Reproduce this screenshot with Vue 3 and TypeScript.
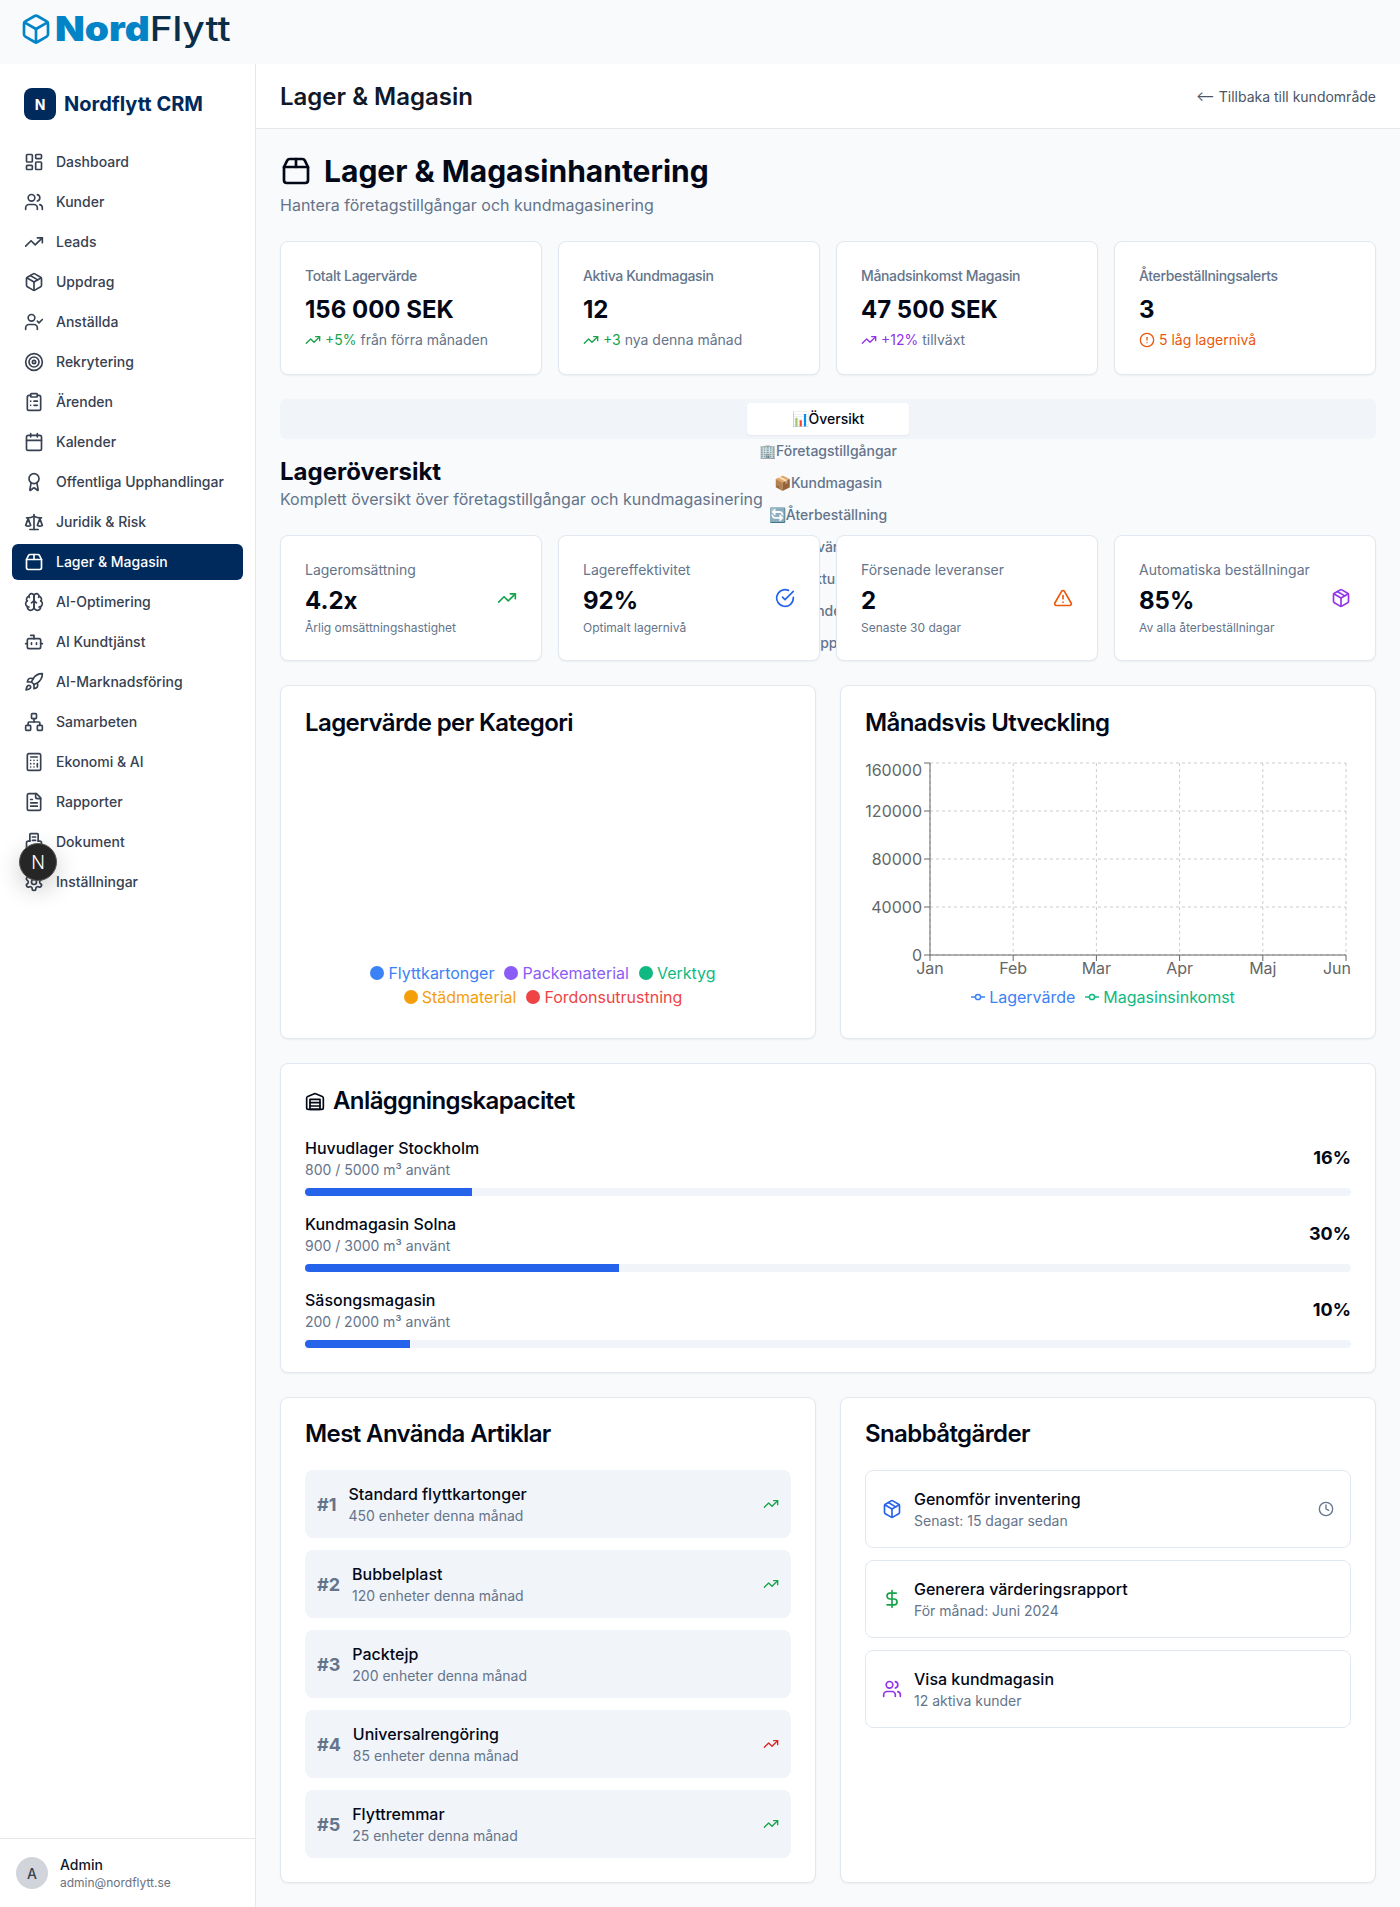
<template>
  <div class="page">
    <header class="logo-bar">
      <Icon name="box" :size="32" class="logo-icon" />
      <span class="logo-text"><b>Nord</b><span>Flytt</span></span>
    </header>

    <div class="layout">
      <aside class="sidebar">
        <div class="brand">
          <span class="brand-mark">N</span>
          <span class="brand-name">Nordflytt CRM</span>
        </div>
        <nav class="nav">
          <a v-for="item in navItems" :key="item.label" class="nav-item" :class="{ active: item.active }">
            <Icon :name="item.icon" />
            <span>{{ item.label }}</span>
          </a>
        </nav>
        <div class="user">
          <span class="avatar">A</span>
          <div>
            <div class="user-name">Admin</div>
            <div class="user-mail">admin@nordflytt.se</div>
          </div>
        </div>
      </aside>

      <main class="main">
        <div class="topbar">
          <h1>Lager &amp; Magasin</h1>
          <a class="back">⟵ Tillbaka till kundområde</a>
        </div>

        <div class="content">
          <div class="page-title">
            <Icon name="package2" :size="32" />
            <h2>Lager &amp; Magasinhantering</h2>
          </div>
          <p class="page-sub">Hantera företagstillgångar och kundmagasinering</p>

          <section class="grid-4">
            <div v-for="stat in stats" :key="stat.label" class="card stat">
              <div class="stat-label">{{ stat.label }}</div>
              <div class="stat-value">{{ stat.value }}</div>
              <div class="stat-note">
                <Icon :name="stat.icon" :size="16" :class="stat.tone" />
                <span :class="stat.tone">{{ stat.change }}</span>
                <span v-if="stat.rest">&nbsp;{{ stat.rest }}</span>
              </div>
            </div>
          </section>

          <div class="tabs">
            <div class="tab-list">
              <div v-for="(tab, i) in tabs" :key="tab" class="tab" :class="{ selected: i === 0 }">{{ tab }}</div>
            </div>
          </div>

          <h3 class="section-title">Lageröversikt</h3>
          <p class="section-sub">Komplett översikt över företagstillgångar och kundmagasinering</p>

          <section class="grid-4">
            <div v-for="kpi in kpis" :key="kpi.label" class="card kpi">
              <div>
                <div class="kpi-label">{{ kpi.label }}</div>
                <div class="kpi-value">{{ kpi.value }}</div>
                <div class="kpi-note">{{ kpi.note }}</div>
              </div>
              <Icon :name="kpi.icon" :class="kpi.tone" />
            </div>
          </section>

          <section class="grid-2">
            <div class="card panel">
              <h3 class="card-title low">Lagervärde per Kategori</h3>
              <div class="chart chart-pie">
                <div class="pie-legend">
                  <span v-for="c in categories" :key="c.name" class="legend-item" :style="{ color: c.color }">
                    <i class="legend-dot" :style="{ background: c.color }"></i>{{ c.name }}
                  </span>
                </div>
              </div>
            </div>

            <div class="card panel">
              <h3 class="card-title low">Månadsvis Utveckling</h3>
              <div class="chart">
                <svg class="line-chart" width="486" height="227" viewBox="0 0 486 227">
                  <g stroke="#ccc" stroke-dasharray="3 3" fill="none">
                    <line v-for="y in yTicks" :key="y.label" x1="65" x2="481" :y1="y.y" :y2="y.y" />
                    <line v-for="x in xTicks" :key="x.label" :x1="x.x" :x2="x.x" y1="5" y2="197" />
                  </g>
                  <g stroke="#666" fill="none">
                    <line x1="65" x2="65" y1="5" y2="197" />
                    <line x1="65" x2="481" y1="197" y2="197" />
                    <line v-for="y in yTicks" :key="y.label" x1="59" x2="65" :y1="y.y" :y2="y.y" />
                    <line v-for="x in xTicks" :key="x.label" :x1="x.x" :x2="x.x" y1="197" y2="203" />
                  </g>
                  <g class="tick">
                    <text v-for="y in yTicks" :key="y.label" x="57" :y="y.textY" text-anchor="end">{{ y.label }}</text>
                    <text v-for="x in xTicks" :key="x.label" :x="x.textX" y="216" :text-anchor="x.anchor">{{ x.label }}</text>
                  </g>
                </svg>
                <div class="line-legend">
                  <span v-for="s in series" :key="s.name" class="legend-item" :style="{ color: s.color }">
                    <svg width="14" height="14" viewBox="0 0 14 14" fill="none" :stroke="s.color" stroke-width="1.5">
                      <line x1="0" x2="14" y1="7" y2="7" />
                      <circle cx="7" cy="7" r="2.6" fill="#fff" />
                    </svg>{{ s.name }}
                  </span>
                </div>
              </div>
            </div>
          </section>

          <section class="card capacity">
            <h3 class="card-title low with-icon">
              <Icon name="warehouse" />
              Anläggningskapacitet
            </h3>
            <div v-for="site in sites" :key="site.name" class="site">
              <div class="site-head">
                <div>
                  <div class="row-name">{{ site.name }}</div>
                  <div class="row-sub">{{ site.used }} / {{ site.total }} m³ använt</div>
                </div>
                <div class="site-pct">{{ pct(site) }}%</div>
              </div>
              <div class="bar"><div class="bar-fill" :style="{ width: pct(site) + '%' }"></div></div>
            </div>
          </section>

          <section class="grid-2 bottom">
            <div class="card panel">
              <h3 class="card-title">Mest Använda Artiklar</h3>
              <div class="list">
                <div v-for="(art, i) in articles" :key="art.name" class="article">
                  <span class="rank">#{{ i + 1 }}</span>
                  <div class="grow">
                    <div class="row-name">{{ art.name }}</div>
                    <div class="row-sub">{{ art.count }} enheter denna månad</div>
                  </div>
                  <Icon v-if="art.tone" name="trending" :size="16" :class="art.tone" />
                </div>
              </div>
            </div>

            <div class="card panel">
              <h3 class="card-title">Snabbåtgärder</h3>
              <div class="list">
                <div v-for="act in actions" :key="act.name" class="action">
                  <Icon :name="act.icon" :class="act.tone" />
                  <div class="grow">
                    <div class="row-name">{{ act.name }}</div>
                    <div class="row-sub">{{ act.sub }}</div>
                  </div>
                  <Icon v-if="act.clock" name="clock" :size="16" class="muted" />
                </div>
              </div>
            </div>
          </section>
        </div>
      </main>
    </div>

    <div class="dev-badge">N</div>
  </div>
</template>

<script setup lang="ts">
import { h } from 'vue'

const icons: Record<string, string> = {
  box: '<path d="M21 8a2 2 0 0 0-1-1.73l-7-4a2 2 0 0 0-2 0l-7 4A2 2 0 0 0 3 8v8a2 2 0 0 0 1 1.73l7 4a2 2 0 0 0 2 0l7-4A2 2 0 0 0 21 16Z"/><path d="m3.3 7 8.7 5 8.7-5"/><path d="M12 22V12"/>',
  dashboard: '<rect width="7" height="9" x="3" y="3" rx="1"/><rect width="7" height="5" x="14" y="3" rx="1"/><rect width="7" height="9" x="14" y="12" rx="1"/><rect width="7" height="5" x="3" y="16" rx="1"/>',
  users: '<path d="M16 21v-2a4 4 0 0 0-4-4H6a4 4 0 0 0-4 4v2"/><circle cx="9" cy="7" r="4"/><path d="M22 21v-2a4 4 0 0 0-3-3.87"/><path d="M16 3.13a4 4 0 0 1 0 7.75"/>',
  trending: '<polyline points="22 7 13.5 15.5 8.5 10.5 2 17"/><polyline points="16 7 22 7 22 13"/>',
  package: '<path d="m7.5 4.27 9 5.15"/><path d="M21 8a2 2 0 0 0-1-1.73l-7-4a2 2 0 0 0-2 0l-7 4A2 2 0 0 0 3 8v8a2 2 0 0 0 1 1.73l7 4a2 2 0 0 0 2 0l7-4A2 2 0 0 0 21 16Z"/><path d="m3.3 7 8.7 5 8.7-5"/><path d="M12 22V12"/>',
  userCheck: '<path d="M16 21v-2a4 4 0 0 0-4-4H6a4 4 0 0 0-4 4v2"/><circle cx="9" cy="7" r="4"/><polyline points="16 11 18 13 22 9"/>',
  target: '<circle cx="12" cy="12" r="10"/><circle cx="12" cy="12" r="6"/><circle cx="12" cy="12" r="2"/>',
  clipboard: '<rect width="8" height="4" x="8" y="2" rx="1" ry="1"/><path d="M16 4h2a2 2 0 0 1 2 2v14a2 2 0 0 1-2 2H6a2 2 0 0 1-2-2V6a2 2 0 0 1 2-2h2"/><path d="M12 11h4"/><path d="M12 16h4"/><path d="M8 11h.01"/><path d="M8 16h.01"/>',
  calendar: '<path d="M8 2v4"/><path d="M16 2v4"/><rect width="18" height="18" x="3" y="4" rx="2"/><path d="M3 10h18"/>',
  award: '<path d="m15.477 12.89 1.515 8.526a.5.5 0 0 1-.81.47l-3.58-2.687a1 1 0 0 0-1.197 0l-3.586 2.686a.5.5 0 0 1-.81-.469l1.514-8.526"/><circle cx="12" cy="8" r="6"/>',
  scale: '<path d="m16 16 3-8 3 8c-.87.65-1.92 1-3 1s-2.13-.35-3-1Z"/><path d="m2 16 3-8 3 8c-.87.65-1.92 1-3 1s-2.13-.35-3-1Z"/><path d="M7 21h10"/><path d="M12 3v18"/><path d="M3 7h2c2 0 5-1 7-2 2 1 5 2 7 2h2"/>',
  package2: '<path d="M3 9h18v10a2 2 0 0 1-2 2H5a2 2 0 0 1-2-2V9Z"/><path d="m3 9 2.45-4.9A2 2 0 0 1 7.24 3h9.52a2 2 0 0 1 1.8 1.1L21 9"/><path d="M12 3v6"/>',
  brain: '<path d="M12 5a3 3 0 1 0-5.997.125 4 4 0 0 0-2.526 5.77 4 4 0 0 0 .556 6.588A4 4 0 1 0 12 18Z"/><path d="M12 5a3 3 0 1 1 5.997.125 4 4 0 0 1 2.526 5.77 4 4 0 0 1-.556 6.588A4 4 0 1 1 12 18Z"/><path d="M15 13a4.5 4.5 0 0 1-3-4 4.5 4.5 0 0 1-3 4"/><path d="M17.599 6.5a3 3 0 0 0 .399-1.375"/><path d="M6.003 5.125A3 3 0 0 0 6.401 6.5"/><path d="M3.477 10.896a4 4 0 0 1 .585-.396"/><path d="M19.938 10.5a4 4 0 0 1 .585.396"/><path d="M6 18a4 4 0 0 1-1.967-.516"/><path d="M19.967 17.484A4 4 0 0 1 18 18"/>',
  bot: '<path d="M12 8V4H8"/><rect width="16" height="12" x="4" y="8" rx="2"/><path d="M2 14h2"/><path d="M20 14h2"/><path d="M15 13v2"/><path d="M9 13v2"/>',
  rocket: '<path d="M4.5 16.5c-1.5 1.26-2 5-2 5s3.74-.5 5-2c.71-.84.7-2.13-.09-2.91a2.18 2.18 0 0 0-2.91-.09z"/><path d="m12 15-3-3a22 22 0 0 1 2-3.95A12.88 12.88 0 0 1 22 2c0 2.72-.78 7.5-6 11a22.35 22.35 0 0 1-4 2z"/><path d="M9 12H4s.55-3.03 2-4c1.62-1.08 5 0 5 0"/><path d="M12 15v5s3.03-.55 4-2c1.08-1.62 0-5 0-5"/>',
  network: '<rect x="16" y="16" width="6" height="6" rx="1"/><rect x="2" y="16" width="6" height="6" rx="1"/><rect x="9" y="2" width="6" height="6" rx="1"/><path d="M5 16v-3a1 1 0 0 1 1-1h12a1 1 0 0 1 1 1v3"/><path d="M12 12V8"/>',
  calculator: '<rect width="16" height="20" x="4" y="2" rx="2"/><line x1="8" x2="16" y1="6" y2="6"/><line x1="16" x2="16" y1="14" y2="18"/><path d="M16 10h.01"/><path d="M12 10h.01"/><path d="M8 10h.01"/><path d="M12 14h.01"/><path d="M8 14h.01"/><path d="M12 18h.01"/><path d="M8 18h.01"/>',
  fileText: '<path d="M15 2H6a2 2 0 0 0-2 2v16a2 2 0 0 0 2 2h12a2 2 0 0 0 2-2V7Z"/><path d="M14 2v4a2 2 0 0 0 2 2h4"/><path d="M10 9H8"/><path d="M16 13H8"/><path d="M16 17H8"/>',
  documents: '<path d="M7 11V3a1 1 0 0 1 1-1h8a1 1 0 0 1 1 1v8"/><path d="M10 6h4"/><path d="M10 10h4"/><path d="M7 11H5a2 2 0 0 0-2 2v7a2 2 0 0 0 2 2h14a2 2 0 0 0 2-2v-7a2 2 0 0 0-2-2h-2"/>',
  settings: '<path d="M12.22 2h-.44a2 2 0 0 0-2 2v.18a2 2 0 0 1-1 1.73l-.43.25a2 2 0 0 1-2 0l-.15-.08a2 2 0 0 0-2.73.73l-.22.38a2 2 0 0 0 .73 2.73l.15.1a2 2 0 0 1 1 1.72v.51a2 2 0 0 1-1 1.74l-.15.09a2 2 0 0 0-.73 2.73l.22.38a2 2 0 0 0 2.73.73l.15-.08a2 2 0 0 1 2 0l.43.25a2 2 0 0 1 1 1.73V20a2 2 0 0 0 2 2h.44a2 2 0 0 0 2-2v-.18a2 2 0 0 1 1-1.73l.43-.25a2 2 0 0 1 2 0l.15.08a2 2 0 0 0 2.73-.73l.22-.39a2 2 0 0 0-.73-2.73l-.15-.08a2 2 0 0 1-1-1.74v-.5a2 2 0 0 1 1-1.74l.15-.09a2 2 0 0 0 .73-2.73l-.22-.38a2 2 0 0 0-2.73-.73l-.15.08a2 2 0 0 1-2 0l-.43-.25a2 2 0 0 1-1-1.73V4a2 2 0 0 0-2-2z"/><circle cx="12" cy="12" r="3"/>',
  check: '<path d="M22 11.08V12a10 10 0 1 1-5.93-9.14"/><polyline points="22 4 12 14.01 9 11.01"/>',
  triangle: '<path d="m21.73 18-8-14a2 2 0 0 0-3.48 0l-8 14A2 2 0 0 0 4 21h16a2 2 0 0 0 1.73-3"/><path d="M12 9v4"/><path d="M12 17h.01"/>',
  alert: '<circle cx="12" cy="12" r="10"/><line x1="12" x2="12" y1="8" y2="12"/><line x1="12" x2="12.01" y1="16" y2="16"/>',
  clock: '<circle cx="12" cy="12" r="10"/><polyline points="12 6 12 12 16 14"/>',
  dollar: '<line x1="12" x2="12" y1="2" y2="22"/><path d="M17 5H9.5a3.5 3.5 0 0 0 0 7h5a3.5 3.5 0 0 1 0 7H6"/>',
  warehouse: '<path d="M22 8.35V20a2 2 0 0 1-2 2H4a2 2 0 0 1-2-2V8.35A2 2 0 0 1 3.26 6.5l8-3.2a2 2 0 0 1 1.48 0l8 3.2A2 2 0 0 1 22 8.35Z"/><path d="M6 18h12"/><path d="M6 14h12"/><rect width="12" height="12" x="6" y="10"/>',
}

const Icon = (props: { name: string; size?: number }) =>
  h('svg', {
    width: props.size ?? 20,
    height: props.size ?? 20,
    viewBox: '0 0 24 24',
    fill: 'none',
    stroke: 'currentColor',
    'stroke-width': 2,
    'stroke-linecap': 'round',
    'stroke-linejoin': 'round',
    style: { flexShrink: 0 },
    innerHTML: icons[props.name],
  })

const navItems = [
  { label: 'Dashboard', icon: 'dashboard' },
  { label: 'Kunder', icon: 'users' },
  { label: 'Leads', icon: 'trending' },
  { label: 'Uppdrag', icon: 'package' },
  { label: 'Anställda', icon: 'userCheck' },
  { label: 'Rekrytering', icon: 'target' },
  { label: 'Ärenden', icon: 'clipboard' },
  { label: 'Kalender', icon: 'calendar' },
  { label: 'Offentliga Upphandlingar', icon: 'award' },
  { label: 'Juridik & Risk', icon: 'scale' },
  { label: 'Lager & Magasin', icon: 'package2', active: true },
  { label: 'AI-Optimering', icon: 'brain' },
  { label: 'AI Kundtjänst', icon: 'bot' },
  { label: 'AI-Marknadsföring', icon: 'rocket' },
  { label: 'Samarbeten', icon: 'network' },
  { label: 'Ekonomi & AI', icon: 'calculator' },
  { label: 'Rapporter', icon: 'fileText' },
  { label: 'Dokument', icon: 'documents' },
  { label: 'Inställningar', icon: 'settings' },
]

const stats = [
  { label: 'Totalt Lagervärde', value: '156 000 SEK', icon: 'trending', tone: 'green', change: '+5%', rest: 'från förra månaden' },
  { label: 'Aktiva Kundmagasin', value: '12', icon: 'trending', tone: 'green', change: '+3', rest: 'nya denna månad' },
  { label: 'Månadsinkomst Magasin', value: '47 500 SEK', icon: 'trending', tone: 'purple', change: '+12%', rest: 'tillväxt' },
  { label: 'Återbeställningsalerts', value: '3', icon: 'alert', tone: 'orange', change: '5 låg lagernivå', rest: '' },
]

const tabs = ['📊Översikt', '🏢Företagstillgångar', '📦Kundmagasin', '🔄Återbeställning', '💰Lagervärderingar', '🧾Fakturering', '📅Underlag', '📈Rapporter']

const kpis = [
  { label: 'Lageromsättning', value: '4.2x', note: 'Årlig omsättningshastighet', icon: 'trending', tone: 'green' },
  { label: 'Lagereffektivitet', value: '92%', note: 'Optimalt lagernivå', icon: 'check', tone: 'blue' },
  { label: 'Försenade leveranser', value: '2', note: 'Senaste 30 dagar', icon: 'triangle', tone: 'orange' },
  { label: 'Automatiska beställningar', value: '85%', note: 'Av alla återbeställningar', icon: 'package', tone: 'purple' },
]

const categories = [
  { name: 'Flyttkartonger', color: '#3b82f6' },
  { name: 'Packematerial', color: '#8b5cf6' },
  { name: 'Verktyg', color: '#10b981' },
  { name: 'Städmaterial', color: '#f59e0b' },
  { name: 'Fordonsutrustning', color: '#ef4444' },
]

const series = [
  { name: 'Lagervärde', color: '#3b82f6' },
  { name: 'Magasinsinkomst', color: '#10b981' },
]

const yTicks = [160000, 120000, 80000, 40000, 0].map((value, i) => ({
  label: String(value),
  y: 5 + i * 48,
  textY: 5 + i * 48 + (i === 0 ? 13 : 6),
}))

const xTicks = ['Jan', 'Feb', 'Mar', 'Apr', 'Maj', 'Jun'].map((label, i) => ({
  label,
  x: 65 + i * 83.2,
  textX: i === 5 ? 486 : 65 + i * 83.2,
  anchor: i === 5 ? 'end' : 'middle',
}))

interface Site {
  name: string
  used: number
  total: number
}

const sites: Site[] = [
  { name: 'Huvudlager Stockholm', used: 800, total: 5000 },
  { name: 'Kundmagasin Solna', used: 900, total: 3000 },
  { name: 'Säsongsmagasin', used: 200, total: 2000 },
]

const pct = (site: Site) => Math.round((site.used / site.total) * 100)

const articles = [
  { name: 'Standard flyttkartonger', count: 450, tone: 'green' },
  { name: 'Bubbelplast', count: 120, tone: 'green' },
  { name: 'Packtejp', count: 200, tone: '' },
  { name: 'Universalrengöring', count: 85, tone: 'red' },
  { name: 'Flyttremmar', count: 25, tone: 'green' },
]

const actions = [
  { name: 'Genomför inventering', sub: 'Senast: 15 dagar sedan', icon: 'package', tone: 'blue', clock: true },
  { name: 'Generera värderingsrapport', sub: 'För månad: Juni 2024', icon: 'dollar', tone: 'green', clock: false },
  { name: 'Visa kundmagasin', sub: '12 aktiva kunder', icon: 'users', tone: 'purple', clock: false },
]
</script>

<style>
html,
body {
  margin: 0;
  background: #f8fafc;
}
</style>

<style scoped>
.page {
  position: relative;
  min-height: 100vh;
  display: flex;
  flex-direction: column;
  background: #f8fafc;
  color: #020817;
  font-family: Inter, 'Noto Sans', sans-serif;
}

h1, h2, h3, p {
  margin: 0;
}

.logo-bar {
  height: 64px;
  flex-shrink: 0;
  box-sizing: border-box;
  padding: 13px 20px 0;
  display: flex;
  align-items: flex-start;
  gap: 3px;
}

.logo-icon {
  color: #0284c7;
}

.logo-text {
  font-size: 34px;
  line-height: 32px;
  color: #0a2e4a;
  font-weight: 500;
  transform: scaleX(1.14);
  transform-origin: left center;
}

.logo-text b {
  font-weight: 900;
  color: #0284c7;
}

.layout {
  flex: 1;
  display: flex;
}

.sidebar {
  width: 256px;
  flex-shrink: 0;
  box-sizing: border-box;
  background: #fff;
  border-right: 1px solid #e5e7eb;
  display: flex;
  flex-direction: column;
}

.brand {
  display: flex;
  align-items: center;
  gap: 8px;
  padding: 24px;
}

.brand-mark {
  width: 32px;
  height: 32px;
  border-radius: 8px;
  background: #002a5c;
  color: #fff;
  font-size: 14px;
  font-weight: 700;
  display: flex;
  align-items: center;
  justify-content: center;
}

.brand-name {
  font-size: 20px;
  font-weight: 700;
  color: #002a5c;
}

.nav {
  padding: 0 12px;
  display: flex;
  flex-direction: column;
  gap: 4px;
}

.nav-item {
  height: 36px;
  box-sizing: border-box;
  padding: 0 12px;
  display: flex;
  align-items: center;
  gap: 12px;
  border-radius: 6px;
  font-size: 14px;
  font-weight: 500;
  color: #374151;
}

.nav-item span {
  padding-bottom: 2px;
}

.nav-item.active {
  background: #002a5c;
  color: #fff;
}

.user {
  margin-top: auto;
  border-top: 1px solid #e5e7eb;
  padding: 16px;
  display: flex;
  align-items: center;
  gap: 12px;
}

.avatar {
  width: 32px;
  height: 32px;
  border-radius: 50%;
  background: #d1d5db;
  color: #374151;
  font-size: 14px;
  font-weight: 500;
  display: flex;
  align-items: center;
  justify-content: center;
}

.user-name {
  font-size: 14px;
  line-height: 20px;
  font-weight: 500;
  color: #111827;
}

.user-mail {
  font-size: 12px;
  line-height: 16px;
  color: #6b7280;
}

.main {
  flex: 1;
  min-width: 0;
}

.topbar {
  background: #fff;
  border-bottom: 1px solid #e5e7eb;
  padding: 17px 24px 15px;
  display: flex;
  align-items: center;
  justify-content: space-between;
}

.topbar h1 {
  font-size: 24px;
  line-height: 32px;
  font-weight: 600;
  color: #111827;
}

.back {
  font-size: 14px;
  color: #4b5563;
  margin-top: -2px;
}

.content {
  padding: 24px;
}

.page-title {
  display: flex;
  align-items: center;
  gap: 12px;
}

.page-title h2 {
  font-size: 30px;
  line-height: 36px;
  font-weight: 700;
}

.page-sub {
  margin-top: 4px;
  font-size: 16px;
  line-height: 24px;
  color: #64748b;
}

.grid-4 {
  margin-top: 24px;
  display: grid;
  grid-template-columns: repeat(4, 1fr);
  gap: 16px;
}

.grid-2 {
  margin-top: 24px;
  display: grid;
  grid-template-columns: repeat(2, 1fr);
  gap: 24px;
}

/* position keeps the overflowing tabs painted underneath the cards */
.card {
  position: relative;
  box-sizing: border-box;
  background: #fff;
  border: 1px solid #e2e8f0;
  border-radius: 8px;
  box-shadow: 0 1px 2px rgba(0, 0, 0, 0.05);
  padding: 24px;
}

.stat-label {
  font-size: 14px;
  line-height: 20px;
  font-weight: 500;
  letter-spacing: -0.35px;
  color: #64748b;
}

.stat-value {
  margin-top: 8px;
  font-size: 24px;
  line-height: 32px;
  font-weight: 700;
}

.stat-note {
  margin-top: 4px;
  display: flex;
  align-items: center;
  font-size: 14px;
  line-height: 20px;
  color: #64748b;
}

.stat-note svg {
  margin-right: 4px;
}

.green { color: #16a34a; }
.purple { color: #9333ea; }
.orange { color: #ea580c; }
.blue { color: #2563eb; }
.red { color: #dc2626; }
.muted { color: #64748b; }

.tabs {
  margin-top: 24px;
  height: 40px;
  box-sizing: border-box;
  padding: 4px;
  border-radius: 6px;
  background: #f1f5f9;
  display: flex;
  justify-content: center;
}

.tab-list {
  height: max-content;
  display: flex;
  flex-direction: column;
}

.tab {
  height: 32px;
  box-sizing: border-box;
  padding: 0 12px 2px;
  display: flex;
  align-items: center;
  justify-content: center;
  border-radius: 4px;
  font-size: 14px;
  font-weight: 500;
  color: #64748b;
  white-space: nowrap;
}

.tab.selected {
  background: #fff;
  color: #020817;
  box-shadow: 0 1px 2px rgba(0, 0, 0, 0.05);
}

.section-title {
  margin-top: 17px;
  font-size: 24px;
  line-height: 31px;
  font-weight: 700;
}

.section-sub {
  font-size: 16px;
  line-height: 24px;
  color: #64748b;
}

.kpi {
  display: flex;
  align-items: center;
  justify-content: space-between;
}

.kpi-label {
  font-size: 14px;
  line-height: 20px;
  color: #64748b;
}

.kpi-value {
  margin-top: 5px;
  font-size: 24px;
  line-height: 32px;
  font-weight: 700;
}

.kpi-note {
  margin-top: 3px;
  font-size: 12px;
  line-height: 16px;
  color: #64748b;
}

.card-title {
  font-size: 24px;
  line-height: 24px;
  font-weight: 600;
  letter-spacing: -0.6px;
  margin-bottom: 24px;
}

.card-title.low {
  line-height: 26px;
  margin-bottom: 22px;
}

.with-icon {
  display: flex;
  align-items: center;
  gap: 8px;
}

.chart {
  height: 256px;
  display: flex;
  flex-direction: column;
}

.chart-pie {
  justify-content: flex-end;
  padding-bottom: 5px;
  box-sizing: border-box;
}

.line-chart {
  display: block;
}

.tick {
  font-size: 16px;
  fill: #666;
}

.legend-item {
  display: inline-flex;
  align-items: center;
  gap: 4px;
  margin-right: 10px;
  font-size: 16px;
  line-height: 24px;
}

.legend-dot {
  width: 14px;
  height: 14px;
  border-radius: 50%;
}

.pie-legend {
  max-width: 400px;
  margin: 0 auto;
  display: flex;
  flex-wrap: wrap;
  justify-content: center;
}

.line-legend {
  display: flex;
  justify-content: center;
}

.capacity {
  margin-top: 24px;
}

.site + .site {
  margin-top: 16px;
}

.site-head {
  display: flex;
  align-items: center;
  justify-content: space-between;
  margin-bottom: 8px;
}

.row-name {
  font-size: 16px;
  line-height: 24px;
  font-weight: 500;
}

.row-sub {
  font-size: 14px;
  line-height: 20px;
  color: #64748b;
}

.site-pct {
  font-size: 18px;
  line-height: 28px;
  font-weight: 700;
}

.bar {
  height: 8px;
  border-radius: 999px;
  background: #f1f5f9;
  overflow: hidden;
}

.bar-fill {
  height: 100%;
  background: #2563eb;
}

.list {
  display: flex;
  flex-direction: column;
  gap: 12px;
}

.article {
  padding: 12px;
  display: flex;
  align-items: center;
  gap: 12px;
  border-radius: 8px;
  background: #f1f5f9;
}

.rank {
  font-size: 18px;
  font-weight: 700;
  color: #64748b;
}

.grow {
  flex: 1;
  min-width: 0;
}

.action {
  padding: 16px;
  display: flex;
  align-items: center;
  gap: 12px;
  border: 1px solid #e2e8f0;
  border-radius: 8px;
}

.dev-badge {
  position: absolute;
  left: 19px;
  top: 843px;
  width: 38px;
  height: 38px;
  box-sizing: border-box;
  border: 1px solid #555;
  border-radius: 50%;
  background: #262626;
  color: #fff;
  font-size: 18px;
  font-weight: 300;
  display: flex;
  align-items: center;
  justify-content: center;
  box-shadow: 0 8px 24px rgba(0, 0, 0, 0.2);
}
</style>
